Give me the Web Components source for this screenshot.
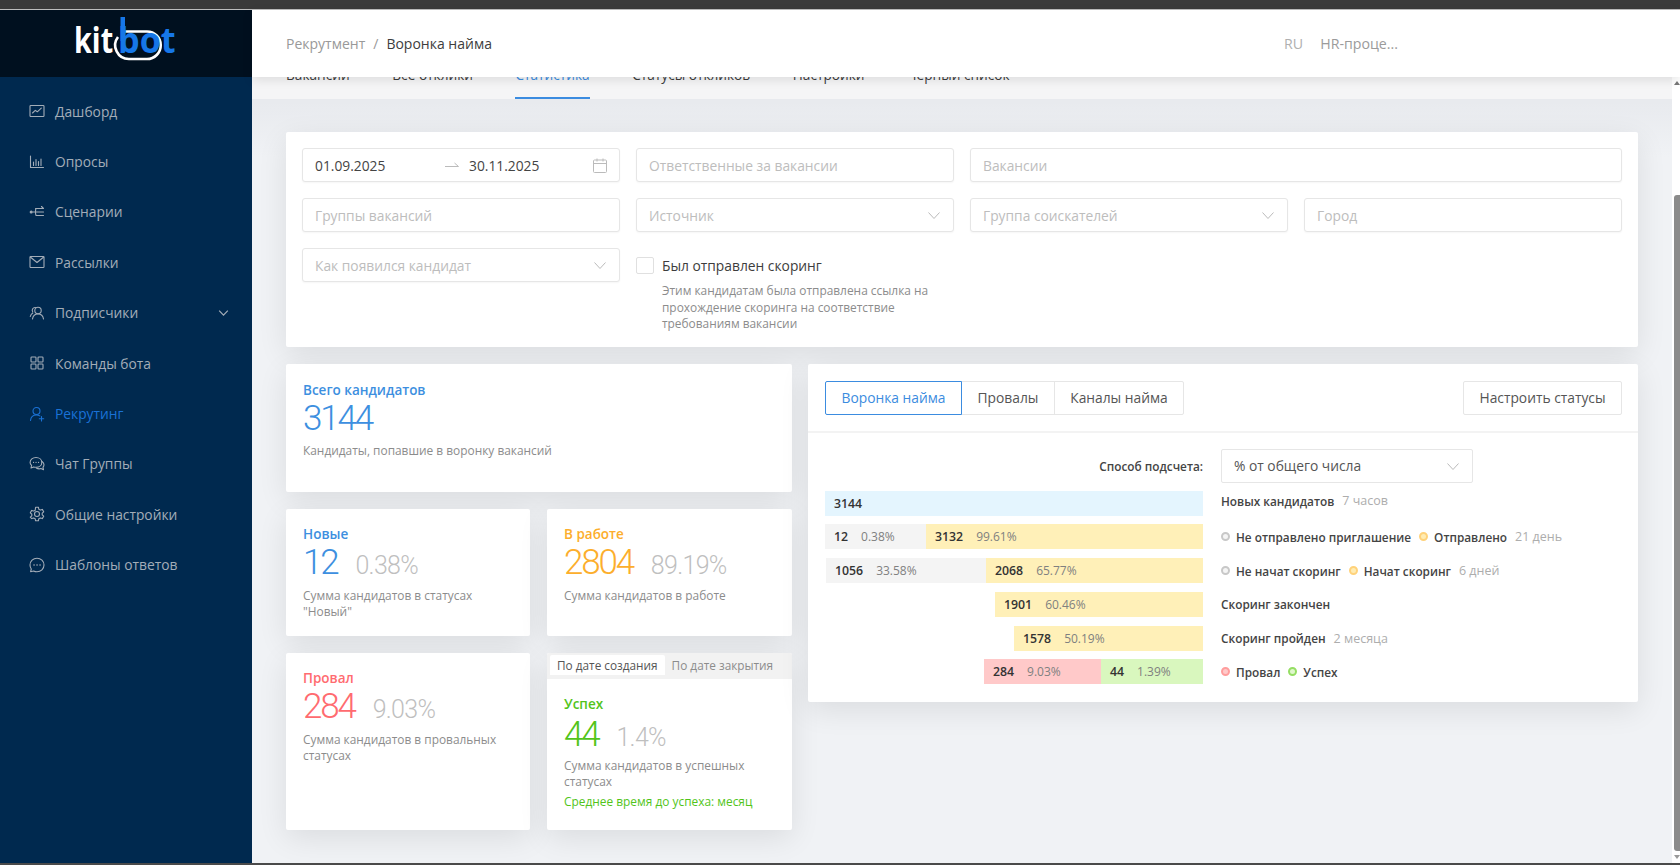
<!DOCTYPE html>
<html lang="ru">
<head>
<meta charset="utf-8">
<title>Воронка найма</title>
<style>
html, body { margin: 0; height: 100%; overflow: hidden; background: #f0f2f5; }
body { font-family: "Open Sans", "Noto Sans", sans-serif; font-size: 13.8px; color: #444; }
</style>
</head>
<body>
<kb-shell>
  <kb-sidebar slot="side">
    <kb-nav-item icon="dashboard">Дашборд</kb-nav-item>
    <kb-nav-item icon="polls">Опросы</kb-nav-item>
    <kb-nav-item icon="flows">Сценарии</kb-nav-item>
    <kb-nav-item icon="mail">Рассылки</kb-nav-item>
    <kb-nav-item icon="people" caret>Подписчики</kb-nav-item>
    <kb-nav-item icon="grid">Команды бота</kb-nav-item>
    <kb-nav-item icon="recruit" active>Рекрутинг</kb-nav-item>
    <kb-nav-item icon="chat">Чат Группы</kb-nav-item>
    <kb-nav-item icon="gear">Общие настройки</kb-nav-item>
    <kb-nav-item icon="bubble">Шаблоны ответов</kb-nav-item>
  </kb-sidebar>
  <kb-header slot="head"></kb-header>
  <kb-tabs></kb-tabs>
  <kb-filters></kb-filters>
  <kb-board>
    <kb-stats slot="left">
      <kb-stat wide tone="blue" title="Всего кандидатов" value="3144" note="Кандидаты, попавшие в воронку вакансий"></kb-stat>
      <kb-stat tone="blue" title="Новые" value="12" pct="0.38%" note="Сумма кандидатов в статусах &quot;Новый&quot;"></kb-stat>
      <kb-stat tone="orange" title="В работе" value="2804" pct="89.19%" note="Сумма кандидатов в работе"></kb-stat>
      <kb-stat tone="red" title="Провал" value="284" pct="9.03%" note="Сумма кандидатов в провальных статусах"></kb-stat>
      <kb-stat tone="green" tabbed title="Успех" value="44" pct="1.4%" note="Сумма кандидатов в успешных статусах" extra="Среднее время до успеха: месяц"></kb-stat>
    </kb-stats>
    <kb-funnel slot="right"></kb-funnel>
  </kb-board>
</kb-shell>

<script>
const icons = {
  dashboard: '<rect x="1" y="2.5" width="14" height="11" rx=".8"/><path d="M3.5 10l2.8-2.6 2 1.4 4-3.6"/>',
  polls: '<path d="M1.5 2v11.5h13"/><path d="M4.5 11.5V8M7 11.5V5.5M9.5 11.5V7.5M12 11.5V5"/>',
  flows: '<circle cx="2.2" cy="8" r="1" fill="currentColor"/><path d="M4 8h4M6.5 4.5h8M12.5 2.5l2 2M6.5 8c0-2 0-3.5 1-3.5M6.5 8c0 2 0 3.5 1 3.5M7 11.5h7.5M8 8h6.5"/>',
  mail: '<rect x="1" y="2.5" width="14" height="11" rx=".8"/><path d="M1.3 3l6.7 5.5L14.7 3"/>',
  people: '<circle cx="9" cy="5.5" r="3.2"/><path d="M3.5 14c.5-3.5 2.8-5 5.5-5s5 1.5 5.5 5"/><path d="M6.5 2.5A2.8 2.8 0 0 0 3.7 6.8M3.8 8C2.5 8.8 1.6 10 1.3 11.5"/>',
  grid: '<rect x="2" y="2" width="5" height="5" rx=".8"/><rect x="9" y="2" width="5" height="5" rx=".8"/><rect x="2" y="9" width="5" height="5" rx=".8"/><rect x="9" y="9" width="5" height="5" rx=".8"/>',
  recruit: '<circle cx="7.5" cy="5" r="3.5"/><path d="M1.5 14.5c.4-3.6 2.8-5.5 6-5.500 1.3 0 2.4.3 3.3.9"/><path d="M12.5 10.500v4.500M10.300 12.800h4.400"/>',
  chat: '<path d="M7 1.500c3.300 0 5.800 2.100 5.800 4.900S10.300 11.300 7 11.300c-.8 0-1.600-.1-2.300-.4L2 12l.6-2.600C1.600 8.500 1.100 7.500 1.100 6.400c0-2.800 2.600-4.900 5.900-4.900z"/><path d="M13 5.500c1.200.8 2 2 2 3.300 0 .9-.4 1.800-1 2.500l.5 2.400-2.600-1.100c-1.400.5-3.200.3-4.600-.6"/><path d="M4.500 6.400h.1M7 6.400h.1M9.500 6.400h.1"/>',
  gear: '<circle cx="8" cy="8" r="2.5"/><path d="M6.600 1.200h2.800l.4 2 1.500.9 2-.7 1.400 2.400-1.500 1.400v1.600l1.500 1.400-1.400 2.400-2-.7-1.500.9-.4 2H6.600l-.4-2-1.500-.9-2 .7L1.300 11.200l1.500-1.400V8.200L1.300 6.800l1.400-2.400 2 .7 1.500-.9z"/>',
  bubble: '<path d="M8 1.200c3.900 0 7 3 7 6.800s-3.100 6.800-7 6.800c-1.200 0-2.400-.3-3.400-.8l-3 .7.700-2.700A6.700 6.700 0 0 1 1 8c0-3.800 3.100-6.800 7-6.800z"/><path d="M5 8h.1M8 8h.1M11 8h.1" stroke-width="1.5"/>'
};

const chevron = '<svg width="14" height="14" viewBox="0 0 14 14" fill="none" stroke="currentColor" stroke-width="1"><path d="M1.5 4.5L7 10.500l5.500-6"/></svg>';

class KbShell extends HTMLElement {
  constructor() {
    super();
    this.attachShadow({mode: "open"}).innerHTML = `
<style>
:host { display: flex; flex-direction: column; height: 100vh; }
.chrome { height: 9px; background: #3a3a3a; border-bottom: 1px solid #bdbdbd; flex: none; }
.floor { height: 2px; background: #4a4a4a; flex: none; }
.body { flex: 1; display: flex; min-height: 0; }
.main { flex: 1; display: flex; flex-direction: column; min-width: 0; }
.view { flex: 1; display: flex; min-height: 0; background: #fff; }
.page { flex: 1; background: linear-gradient(#e8eaee 25px, #f0f2f5 80px); overflow: hidden; min-width: 0; }
.bar { width: 8px; flex: none; display: flex; flex-direction: column; align-items: flex-end; background: #fff; }
.up, .down { width: 0; height: 0; margin: 4px 0; border: 3px solid transparent; }
.up { border-bottom: 4px solid #777; border-top-width: 0; }
.down { border-top: 4px solid #999; border-bottom-width: 0; }
.track { flex: 1; width: 6px; padding-top: 106px; display: flex; }
.thumb { flex: 1; background: #8b8b8b; border-radius: 3px 0 0 3px; }
</style>
<div class="chrome"></div>
<div class="body">
  <slot name="side"></slot>
  <div class="main">
    <slot name="head"></slot>
    <div class="view">
      <div class="page"><slot></slot></div>
      <div class="bar"><i class="up"></i><div class="track"><div class="thumb"></div></div><i class="down"></i></div>
    </div>
  </div>
</div>
<div class="floor"></div>`;
  }
}

class KbSidebar extends HTMLElement {
  constructor() {
    super();
    this.attachShadow({mode: "open"}).innerHTML = `
<style>
:host { display: flex; flex-direction: column; width: 252px; flex: none; background: #00294f; }
.logo { height: 67px; background: #00101f; display: flex; align-items: center; justify-content: center; flex: none; }
svg { display: block; margin-bottom: 9px; }
text { font-family: "Open Sans", sans-serif; font-weight: 700; font-size: 36px; }
nav { padding-top: 9px; display: flex; flex-direction: column; }
</style>
<div class="logo">
  <svg width="110" height="50" viewBox="0 0 110 50" fill="none">
    <path d="M54 17.5H76A13.7 13.7 0 0 1 76 45H58A13.7 13.7 0 0 1 47 23" stroke="#fff" stroke-width="2.6"/>
    <rect x="49.5" y="3" width="4.5" height="24" fill="#1677e8"/>
    <text transform="translate(3 39) scale(.8 1)" fill="#fff">kit</text>
    <text transform="translate(47 39) scale(.95 1)" fill="#1677e8">bot</text>
  </svg>
</div>
<nav><slot></slot></nav>`;
  }
}

class KbNavItem extends HTMLElement {
  constructor() {
    super();
    const shadow = this.attachShadow({mode: "open"});
    const caret = this.hasAttribute("caret") ? `<span class="caret">${chevron}</span>` : "";
    shadow.innerHTML = `
<style>
:host { display: flex; align-items: center; height: 50.4px; padding: 0 23px 0 29px; color: #a3adb8; font-size: 13.8px; }
:host([active]) { color: #1a72d6; }
svg { display: block; }
.ico { width: 16px; height: 16px; margin-right: 10px; flex: none; }
.caret { margin-left: auto; display: flex; }
.caret svg { width: 11px; height: 11px; stroke-width: 1.5; }
</style>
<svg class="ico" viewBox="0 0 16 16" fill="none" stroke="currentColor" stroke-width="1.1" stroke-linecap="round" stroke-linejoin="round">${icons[this.getAttribute("icon")]}</svg>
<slot></slot>${caret}`;
  }
}

class KbHeader extends HTMLElement {
  constructor() {
    super();
    this.attachShadow({mode: "open"}).innerHTML = `
<style>
:host { display: flex; align-items: center; height: 67px; flex: none; background: #fff; padding: 0 282px 0 34px; font-size: 14px; box-shadow: 0 3px 10px rgba(0,0,0,.1); position: relative; z-index: 2; }
.crumb { color: #999; }
.sep { color: #999; margin: 0 8px; }
.now { color: #3d3d3d; }
.right { margin-left: auto; display: flex; gap: 17px; color: #b0b0b0; font-size: 14.2px; }
.user { color: #9b9b9b; }
</style>
<span class="crumb">Рекрутмент</span><span class="sep">/</span><span class="now">Воронка найма</span>
<div class="right"><span>RU</span><span class="user">HR-проце...</span></div>`;
  }
}

class KbTabs extends HTMLElement {
  constructor() {
    super();
    const names = ["Вакансии", "Все отклики", "Статистика", "Статусы откликов", "Настройки", "Черный список"];
    const shadow = this.attachShadow({mode: "open"});
    shadow.innerHTML = `
<style>
:host { display: flex; gap: 42.5px; height: 47px; margin-top: -25px; padding: 0 34px; background: #f5f5f6; font-size: 13.7px; color: #3d3d3d; box-sizing: border-box; overflow: hidden; }
span { height: 47px; line-height: 45px; box-sizing: border-box; white-space: nowrap; }
.on { color: #3b8ce0; border-bottom: 2px solid #3b8ce0; }
</style>
${names.map((n) => `<span class="${n === "Статистика" ? "on" : ""}">${n}</span>`).join("")}`;
  }
}

class KbField extends HTMLElement {
  constructor() {
    super();
    const arrow = this.hasAttribute("select") ? `<span class="arrow">${chevron}</span>` : "";
    this.attachShadow({mode: "open"}).innerHTML = `
<style>
:host { display: flex; align-items: center; height: 34px; box-sizing: border-box; background: #fff; border: 1px solid #e6e6e6; border-radius: 3px; padding: 0 12px; color: #bdbdbd; font-size: 13.8px; box-shadow: 0 1px 2px rgba(0,0,0,.04); white-space: nowrap; }
.arrow { margin-left: auto; display: flex; color: #bbb; }
</style>
<slot></slot>${arrow}`;
  }
}

class KbDateRange extends HTMLElement {
  constructor() {
    super();
    this.attachShadow({mode: "open"}).innerHTML = `
<style>
:host { display: flex; align-items: center; height: 34px; box-sizing: border-box; background: #fff; border: 1px solid #e6e6e6; border-radius: 3px; padding: 0 12px; color: #444; font-size: 13.8px; box-shadow: 0 1px 2px rgba(0,0,0,.04); }
.from { width: 130px; }
svg { display: block; flex: none; }
.to { margin-left: 10px; }
.cal { margin-left: auto; color: #bbb; }
</style>
<span class="from">01.09.2025</span>
<svg width="14" height="8" viewBox="0 0 14 8" fill="none" stroke="#bbb"><path d="M0 5.5h13.5M9.5 2l4 3.5"/></svg>
<span class="to">30.11.2025</span>
<svg class="cal" width="14" height="15" viewBox="0 0 14 15" fill="none" stroke="currentColor"><rect x=".5" y="2" width="13" height="12.5" rx="1"/><path d="M.5 5.5h13M4 .5v3M10 .5v3"/></svg>`;
  }
}

class KbFilters extends HTMLElement {
  constructor() {
    super();
    this.attachShadow({mode: "open"}).innerHTML = `
<style>
:host { display: grid; grid-template-columns: repeat(4, 1fr); gap: 16px; margin: 33px 34px 17px; padding: 16px 16px 15px; background: #fff; border-radius: 2px; box-shadow: 0 8px 30px rgba(0,0,0,.09); }
.wide { grid-column: span 2; }
.check { grid-column: span 2; display: grid; grid-template-columns: 18px 1fr; column-gap: 8px; align-items: start; padding-top: 9px; }
.box { width: 18px; height: 17px; box-sizing: border-box; border: 1px solid #e0e0e0; border-radius: 2px; background: #fff; }
.label { font-size: 13.8px; line-height: 17px; color: #3d3d3d; }
.help { grid-column: 2; margin-top: 8px; width: 290px; font-size: 11.9px; line-height: 16.5px; color: #8c8c8c; }
</style>
<kb-date-range></kb-date-range>
<kb-field>Ответственные за вакансии</kb-field>
<kb-field class="wide">Вакансии</kb-field>
<kb-field>Группы вакансий</kb-field>
<kb-field select>Источник</kb-field>
<kb-field select>Группа соискателей</kb-field>
<kb-field>Город</kb-field>
<kb-field select>Как появился кандидат</kb-field>
<div class="check">
  <span class="box"></span><span class="label">Был отправлен скоринг</span>
  <div class="help">Этим кандидатам была отправлена ссылка на прохождение скоринга на соответствие требованиям вакансии</div>
</div>`;
  }
}

class KbBoard extends HTMLElement {
  constructor() {
    super();
    this.attachShadow({mode: "open"}).innerHTML = `
<style>
:host { display: grid; grid-template-columns: 506px 830px; gap: 16px; margin: 0 34px; align-items: start; }
</style>
<slot name="left"></slot><slot name="right"></slot>`;
  }
}

class KbStats extends HTMLElement {
  constructor() {
    super();
    this.attachShadow({mode: "open"}).innerHTML = `
<style>
:host { display: grid; grid-template-columns: 244px 245px; grid-template-rows: 128px 127px 177px; gap: 17px; }
</style>
<slot></slot>`;
  }
}

const tones = {blue: "#3d8fe0", orange: "#fcae2c", red: "#ff6b70", green: "#52c41a"};

class KbStat extends HTMLElement {
  constructor() {
    super();
    const a = (n) => this.getAttribute(n);
    const pct = a("pct") ? `<span class="pct">${a("pct")}</span>` : "";
    const extra = a("extra") ? `<div class="extra">${a("extra")}</div>` : "";
    const tabs = this.hasAttribute("tabbed")
      ? `<div class="switch"><span class="cur">По дате создания</span><span>По дате закрытия</span></div>` : "";
    this.attachShadow({mode: "open"}).innerHTML = `
<style>
:host { display: block; background: #fff; border-radius: 2px; box-shadow: 0 8px 30px rgba(0,0,0,.09); overflow: hidden; --tone: ${tones[a("tone")]}; }
:host([wide]) { grid-column: span 2; }
.switch { display: flex; height: 26px; background: #f2f2f2; padding: 2px 3px 4px; box-sizing: border-box; font-size: 11.8px; color: #8c8c8c; }
.switch span { padding: 0 7px; line-height: 20px; white-space: nowrap; }
.cur { background: #fff; color: #555; border-radius: 2px 2px 0 0; }
.body { padding: 14px 17px 0; }
:host([wide]) .body { padding-top: 15px; }
.title { color: var(--tone); font-size: 13.5px; font-weight: 600; line-height: 22px; }
.nums { display: flex; align-items: baseline; height: 35px; line-height: 35px; white-space: nowrap; }
:host([wide]) .nums { height: 36px; line-height: 36px; }
:host([tabbed]) .nums { height: 40px; line-height: 40px; }
.val { color: var(--tone); font-family: Roboto, sans-serif; font-weight: 300; font-size: 35px; letter-spacing: -2.2px; margin-right: 18px; }
.pct { color: #bfbfbf; font-family: Roboto, sans-serif; font-weight: 300; font-size: 25px; letter-spacing: -.7px; }
.note { margin-top: 7px; font-size: 11.9px; line-height: 16.5px; color: #8c8c8c; }
:host([wide]) .note { margin-top: 5px; }
:host([tabbed]) .note { margin-top: 2px; }
.extra { margin-top: 3px; font-size: 11.9px; line-height: 16.5px; color: #52c41a; white-space: nowrap; }
</style>
${tabs}<div class="body"><div class="title">${a("title")}</div><div class="nums"><span class="val">${a("value")}</span>${pct}</div><div class="note">${a("note")}</div>${extra}</div>`;
  }
}

class KbBar extends HTMLElement {
  constructor() {
    super();
    const a = (n) => this.getAttribute(n);
    const pct = a("pct") ? `<span class="p">${a("pct")}</span>` : "";
    this.attachShadow({mode: "open"}).innerHTML = `
<style>
:host { display: flex; align-items: center; gap: 13px; padding-left: 9px; box-sizing: border-box; width: ${a("w")}px; flex: none; background: ${a("bg")}; font-size: 12px; white-space: nowrap; }
b { font-weight: 600; font-size: 12.3px; color: #333; }
.p { color: #808080; }
</style>
<b>${a("num")}</b>${pct}`;
  }
}

class KbMark extends HTMLElement {
  constructor() {
    super();
    const marks = {gray: ["#c8c8c8", "#f5f5f5"], yellow: ["#ffd27a", "#ffecb3"], red: ["#ff9d9d", "#ffc9c9"], green: ["#95de64", "#e0f7cc"]};
    const [line, fill] = marks[this.getAttribute("c")] || [];
    const dot = line ? `<i style="border-color:${line};background:${fill}"></i>` : "";
    this.attachShadow({mode: "open"}).innerHTML = `
<style>
:host { display: inline-flex; align-items: center; font-size: 11.8px; font-weight: 600; color: #444; white-space: nowrap; }
i { width: 9px; height: 9px; border: 2px solid; border-radius: 50%; box-sizing: border-box; margin-right: 6px; }
</style>
${dot}<slot></slot>`;
  }
}

class KbFunnel extends HTMLElement {
  constructor() {
    super();
    this.attachShadow({mode: "open"}).innerHTML = `
<style>
:host { display: block; background: #fff; border-radius: 2px; box-shadow: 0 8px 30px rgba(0,0,0,.09); font-size: 13.8px; height: 338px; }
.top { display: flex; justify-content: space-between; height: 69px; padding: 17px 16px 0 17px; box-sizing: border-box; border-bottom: 2px solid #f3f3f3; }
.seg { display: flex; height: 34px; }
.seg span, .btn { display: flex; align-items: center; box-sizing: border-box; border: 1px solid #e6e6e6; color: #555; white-space: nowrap; justify-content: center; }
.seg span { margin-left: -1px; }
.seg .on { margin-left: 0; width: 137px; border-color: #3b8ce0; color: #3b8ce0; border-radius: 2px 0 0 2px; position: relative; }
.seg .mid { width: 94px; }
.seg .end { width: 130px; border-radius: 0 2px 2px 0; }
.btn { width: 159px; height: 34px; border-radius: 2px; }
.grid { display: grid; grid-template-columns: 378px 1fr; column-gap: 18px; padding: 16px 17px 0; }
.how { text-align: right; font-size: 11.8px; font-weight: 600; color: #444; line-height: 34px; }
.pick { display: flex; align-items: center; width: 252px; height: 34px; box-sizing: border-box; padding: 0 12px; border: 1px solid #e6e6e6; border-radius: 2px; color: #555; }
.pick span { margin-left: auto; display: flex; color: #bbb; }
.rows { grid-column: 1 / 3; display: grid; grid-template-columns: 378px 1fr; column-gap: 18px; grid-auto-rows: 25px; row-gap: 8.8px; margin-top: 8px; }
.bars { display: flex; justify-content: flex-end; }
.info { display: flex; align-items: center; gap: 8px; }
.lift { margin-bottom: 5px; }
.time { font-size: 12.5px; color: #adadad; }
</style>
<div class="top">
  <div class="seg"><span class="on">Воронка найма</span><span class="mid">Провалы</span><span class="end">Каналы найма</span></div>
  <div class="btn">Настроить статусы</div>
</div>
<div class="grid">
  <div class="how">Способ подсчета:</div>
  <div class="pick">% от общего числа<span>${chevron}</span></div>
  <div class="rows">
    <div class="bars"><kb-bar w="378" bg="#e4f5fe" num="3144"></kb-bar></div>
    <div class="info lift"><kb-mark>Новых кандидатов</kb-mark><span class="time">7 часов</span></div>
    <div class="bars"><kb-bar w="101" bg="#f4f4f4" num="12" pct="0.38%"></kb-bar><kb-bar w="277" bg="#fff0b8" num="3132" pct="99.61%"></kb-bar></div>
    <div class="info"><kb-mark c="gray">Не отправлено приглашение</kb-mark><kb-mark c="yellow">Отправлено</kb-mark><span class="time">21 день</span></div>
    <div class="bars"><kb-bar w="160" bg="#f4f4f4" num="1056" pct="33.58%"></kb-bar><kb-bar w="217" bg="#fff0b8" num="2068" pct="65.77%"></kb-bar></div>
    <div class="info"><kb-mark c="gray">Не начат скоринг</kb-mark><kb-mark c="yellow">Начат скоринг</kb-mark><span class="time">6 дней</span></div>
    <div class="bars"><kb-bar w="208" bg="#fff0b8" num="1901" pct="60.46%"></kb-bar></div>
    <div class="info"><kb-mark>Скоринг закончен</kb-mark></div>
    <div class="bars"><kb-bar w="189" bg="#fff0b8" num="1578" pct="50.19%"></kb-bar></div>
    <div class="info"><kb-mark>Скоринг пройден</kb-mark><span class="time">2 месяца</span></div>
    <div class="bars"><kb-bar w="117" bg="#ffc9c9" num="284" pct="9.03%"></kb-bar><kb-bar w="102" bg="#d9f7be" num="44" pct="1.39%"></kb-bar></div>
    <div class="info"><kb-mark c="red">Провал</kb-mark><kb-mark c="green">Успех</kb-mark></div>
  </div>
</div>`;
  }
}

customElements.define("kb-shell", KbShell);
customElements.define("kb-sidebar", KbSidebar);
customElements.define("kb-nav-item", KbNavItem);
customElements.define("kb-header", KbHeader);
customElements.define("kb-tabs", KbTabs);
customElements.define("kb-field", KbField);
customElements.define("kb-date-range", KbDateRange);
customElements.define("kb-filters", KbFilters);
customElements.define("kb-board", KbBoard);
customElements.define("kb-stats", KbStats);
customElements.define("kb-stat", KbStat);
customElements.define("kb-bar", KbBar);
customElements.define("kb-mark", KbMark);
customElements.define("kb-funnel", KbFunnel);
</script>
</body>
</html>
